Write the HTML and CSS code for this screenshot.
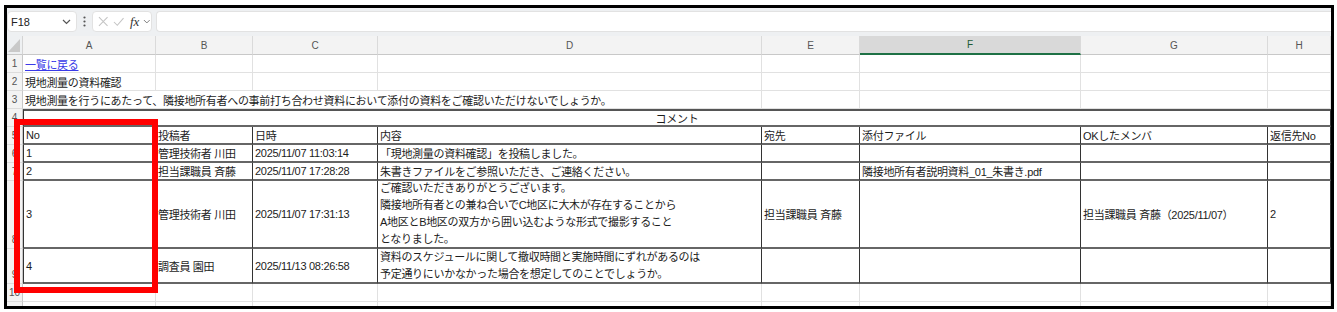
FILE: index.html
```html
<!DOCTYPE html>
<html lang="ja">
<head>
    <meta charset="UTF-8">
    <title>現地測量の資料確認</title>
    <link rel="stylesheet" href="styles.css">
</head>
<body>

    <div class="window">
        <!-- Formula bar -->
        <div class="formula-bar">
            <div class="name-box">
                <span>F18</span>
                <svg class="chev" width="9" height="6" viewBox="0 0 9 6"><path d="M1 1 L4.5 4.5 L8 1" fill="none" stroke="#555" stroke-width="1.2"/></svg>
            </div>
            <svg class="dots" width="3" height="11" viewBox="0 0 3 11"><circle cx="1.5" cy="1.5" r="1.1" fill="#555"/><circle cx="1.5" cy="5.5" r="1.1" fill="#555"/><circle cx="1.5" cy="9.5" r="1.1" fill="#555"/></svg>
            <div class="fx-box">
                <svg width="11" height="11" viewBox="0 0 11 11"><path d="M1 1 L10 10 M10 1 L1 10" stroke="#c4c4c4" stroke-width="1.1"/></svg>
                <svg width="12" height="10" viewBox="0 0 12 10"><path d="M1 5 L4.5 8.5 L11 1" fill="none" stroke="#c4c4c4" stroke-width="1.1"/></svg>
                <span class="fx">fx</span>
                <svg width="8" height="5" viewBox="0 0 8 5"><path d="M1 1 L4 4 L7 1" fill="none" stroke="#777" stroke-width="1"/></svg>
            </div>
            <div class="formula-input"></div>
        </div>

        <!-- Sheet grid -->
        <div class="sheet">
            <div class="corner"></div>
            <div class="col-h">A</div>
            <div class="col-h">B</div>
            <div class="col-h">C</div>
            <div class="col-h">D</div>
            <div class="col-h">E</div>
            <div class="col-h active">F</div>
            <div class="col-h">G</div>
            <div class="col-h">H</div>

            <div class="row-h">1</div>
            <div class="c"><a class="link" href="#">一覧に戻る</a></div>
            <div class="c"></div><div class="c"></div><div class="c"></div><div class="c"></div><div class="c"></div><div class="c"></div><div class="c"></div>

            <div class="row-h">2</div>
            <div class="c">現地測量の資料確認</div>
            <div class="c"></div><div class="c"></div><div class="c"></div><div class="c"></div><div class="c"></div><div class="c"></div><div class="c"></div>

            <div class="row-h">3</div>
            <div class="c span4">現地測量を行うにあたって、隣接地所有者への事前打ち合わせ資料において添付の資料をご確認いただけないでしょうか。</div>
            <div class="c"></div><div class="c"></div><div class="c"></div><div class="c"></div>

            <div class="row-h">4</div>
            <div class="title-cell">コメント</div>

            <div class="row-h">5</div>
            <div class="t first">No</div>
            <div class="t">投稿者</div>
            <div class="t">日時</div>
            <div class="t">内容</div>
            <div class="t">宛先</div>
            <div class="t">添付ファイル</div>
            <div class="t">OKしたメンバ</div>
            <div class="t">返信先No</div>

            <div class="row-h">6</div>
            <div class="t first">1</div>
            <div class="t">管理技術者 川田</div>
            <div class="t">2025/11/07 11:03:14</div>
            <div class="t">「現地測量の資料確認」を投稿しました。</div>
            <div class="t"></div><div class="t"></div><div class="t"></div><div class="t"></div>

            <div class="row-h">7</div>
            <div class="t first">2</div>
            <div class="t">担当課職員 斉藤</div>
            <div class="t">2025/11/07 17:28:28</div>
            <div class="t">朱書きファイルをご参照いただき、ご連絡ください。</div>
            <div class="t"></div>
            <div class="t">隣接地所有者説明資料_01_朱書き.pdf</div>
            <div class="t"></div><div class="t"></div>

            <div class="row-h">8</div>
            <div class="t first">3</div>
            <div class="t">管理技術者 川田</div>
            <div class="t">2025/11/07 17:31:13</div>
            <div class="t multi">ご確認いただきありがとうございます。<br>隣接地所有者との兼ね合いでC地区に大木が存在することから<br>A地区とB地区の双方から囲い込むような形式で撮影すること<br>となりました。</div>
            <div class="t">担当課職員 斉藤</div>
            <div class="t"></div>
            <div class="t">担当課職員 斉藤（2025/11/07）</div>
            <div class="t">2</div>

            <div class="row-h">9</div>
            <div class="t first">4</div>
            <div class="t">調査員 園田</div>
            <div class="t">2025/11/13 08:26:58</div>
            <div class="t multi">資料のスケジュールに関して撤収時間と実施時間にずれがあるのは<br>予定通りにいかなかった場合を想定してのことでしょうか。</div>
            <div class="t"></div><div class="t"></div><div class="t"></div><div class="t"></div>

            <div class="row-h">10</div>
            <div class="c"></div><div class="c"></div><div class="c"></div><div class="c"></div><div class="c"></div><div class="c"></div><div class="c"></div><div class="c"></div>

            <!-- partly visible row 11 -->
            <div class="row-h"></div>
            <div class="c"></div><div class="c"></div><div class="c"></div><div class="c"></div><div class="c"></div><div class="c"></div><div class="c"></div><div class="c"></div>
        </div>
    </div>

    <!-- Red highlight over column A -->
    <div class="highlight"></div>

</body>
</html>
```

FILE: styles.css
```css
/* General reset */
* {
    margin: 0;
    padding: 0;
    box-sizing: border-box;
}

body {
    background-color: #ffffff;
    font-family: "Liberation Sans", "Noto Sans CJK JP", sans-serif;
    font-size: 11px;
    color: #1c1c1c;
    position: relative;
}

/* Black screenshot frame */
.window {
    width: 1330px;
    height: 304px;
    margin: 5px 0 0 4px;
    border: 3px solid #000;
    overflow: hidden;
    background-color: #ffffff;
}

/* Formula bar */
.formula-bar {
    height: 28px;
    display: flex;
    align-items: center;
    background-color: #eef0f2;
    padding-bottom: 1px;
}
.name-box {
    width: 70px;
    height: 21px;
    background-color: #ffffff;
    border: 1px solid #e2e2e2;
    border-radius: 4px;
    display: flex;
    align-items: center;
    justify-content: space-between;
    padding: 0 5px 0 3px;
    font-size: 11px;
    color: #222;
}
.dots {
    margin: 0 6px 0 6px;
}
.fx-box {
    width: 60px;
    height: 21px;
    background-color: #ffffff;
    border: 1px solid #e2e2e2;
    border-radius: 4px;
    display: flex;
    align-items: center;
    gap: 4px;
    padding-left: 5px;
}
.fx {
    font-family: "Liberation Serif", serif;
    font-style: italic;
    font-size: 13px;
    color: #333;
    margin-left: 2px;
}
.formula-input {
    flex: 1;
    height: 21px;
    margin-left: 4px;
    background-color: #ffffff;
    border: 1px solid #e2e2e2;
    border-right: none;
    border-radius: 4px 0 0 4px;
}

/* Sheet grid */
.sheet {
    display: grid;
    grid-template-columns: 16px 133px 97px 125px 384px 98px 221px 187px 63px;
    grid-template-rows: 19px repeat(7, 18px) 68px 35px 18px 18px;
    letter-spacing: -0.3px;
}

.corner {
    background-color: #eef0f2;
    border-bottom: 1px solid #c8c8c8;
    border-right: 1px solid #d4d4d4;
    position: relative;
}
.corner::after {
    content: "";
    position: absolute;
    right: 2px;
    bottom: 2px;
    width: 12px;
    height: 13px;
    background-color: #c9c9c9;
    clip-path: polygon(100% 0, 100% 100%, 0 100%);
}

.col-h {
    background-color: #f3f3f3;
    border-bottom: 1px solid #c8c8c8;
    border-right: 1px solid #dadada;
    color: #555;
    font-size: 10px;
    letter-spacing: 0;
    display: flex;
    align-items: center;
    justify-content: center;
}
.col-h.active {
    background-color: #d9d9d9;
    border-bottom: 2px solid #1e7145;
    color: #1e5a36;
}

.row-h {
    background-color: #f3f3f3;
    border-right: 1px solid #c8c8c8;
    border-bottom: 1px solid #dcdcdc;
    color: #555;
    font-size: 10px;
    letter-spacing: 0;
    line-height: 14px;
    display: flex;
    align-items: flex-end;
    justify-content: center;
    padding-bottom: 1px;
}

/* Plain cells with gridlines */
.c {
    border-right: 1px solid #e1e1e1;
    border-bottom: 1px solid #e1e1e1;
    padding-left: 2px;
    display: flex;
    align-items: center;
    white-space: nowrap;
}
.span4 {
    grid-column: span 4;
}
.link {
    color: #3a3ae8;
    text-decoration: underline;
}

/* Bordered comment table */
.title-cell {
    grid-column: span 8;
    border: 1px solid #333;
    border-top: 2px solid #555;
    border-bottom: 2px solid #666;
    display: flex;
    align-items: center;
    justify-content: center;
}
.t {
    border-right: 1px solid #333;
    border-bottom: 2px solid #666;
    padding-left: 2px;
    display: flex;
    align-items: center;
    white-space: nowrap;
}
.t.first {
    border-left: 1px solid #333;
}
.multi {
    line-height: 17px;
}

/* Red annotation box */
.highlight {
    position: absolute;
    left: 14px;
    top: 119px;
    width: 144px;
    height: 174px;
    border: 6px solid #ff0000;
}
```
